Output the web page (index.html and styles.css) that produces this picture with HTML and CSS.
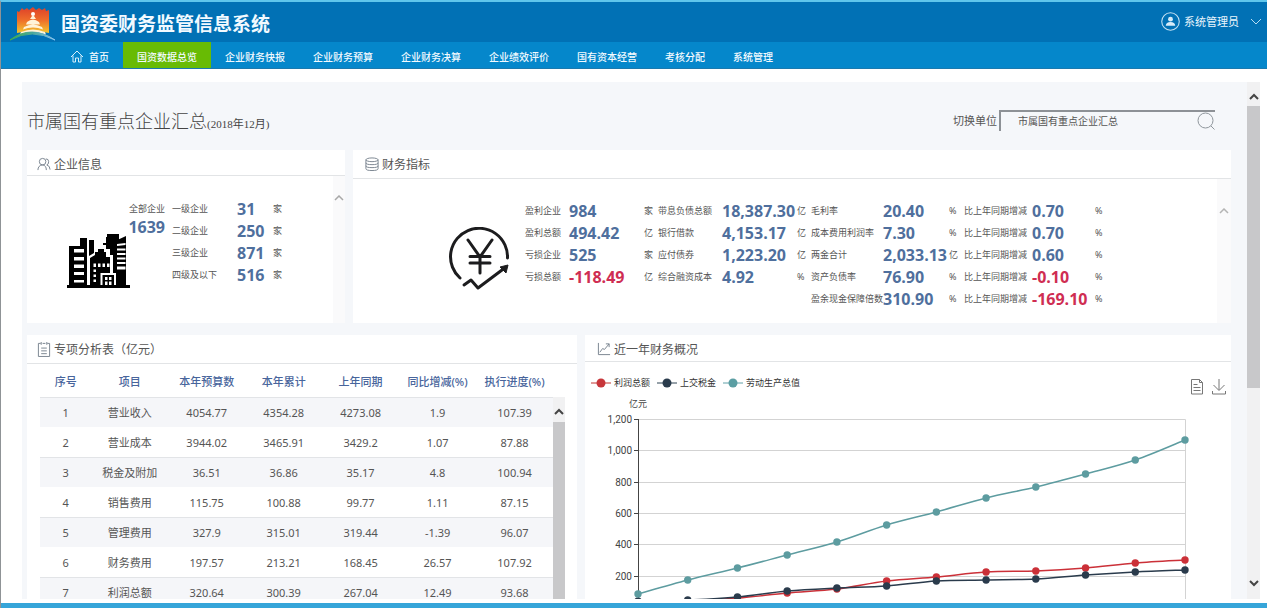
FILE: index.html
```html
<!DOCTYPE html>
<html lang="zh-CN">
<head>
<meta charset="utf-8">
<title>国资委财务监管信息系统</title>
<link rel="stylesheet" href="styles.css">
</head>
<body>
<header class="topbar">
  <svg class="logo" viewBox="0 0 48 36" aria-hidden="true">
    <defs>
      <linearGradient id="lg" x1="0" y1="0" x2="0" y2="1"><stop offset="0" stop-color="#dd3f2a"/><stop offset=".5" stop-color="#ee6d2a"/><stop offset="1" stop-color="#f3c62f"/></linearGradient>
      <linearGradient id="arc" x1="0" x2="1"><stop offset="0" stop-color="#3fae49"/><stop offset=".5" stop-color="#4aa79a"/><stop offset="1" stop-color="#8cc4f0"/></linearGradient>
    </defs>
    <path d="M8 5l2 1 3-4 2 2 3-2 2 2 4-3 3 3 3-2 3 2 3-2 1 3 3-1v23l-16-3-16 3z" fill="url(#lg)"/>
    <circle cx="24" cy="8" r="2" fill="#fff"/>
    <path d="M23 10h2l2 3h-6zM18 16q6-5 12 0l1 2.500H17zM15 21q9-5 18 0l1 2.500q-10-4-20 0zM12 26q12-5 24 0l1 2.500q-13-5-26 0z" fill="#fff3d8"/>
    <path d="M1 34Q22 18 46 34Q23 22 1 34z" fill="url(#arc)" stroke="url(#arc)"/>
  </svg>
  <h1 class="app-title">国资委财务监管信息系统</h1>
  <button class="user" type="button">
    <svg class="avatar" viewBox="0 0 18 18" aria-hidden="true"><circle cx="9" cy="9" r="8.300" fill="none" stroke="#c4e1f3"/><circle cx="9" cy="6.800" r="2.300" fill="#d6ebf8"/><path d="M4.500 13q.3-3.500 4.500-3.500t4.500 3.500z" fill="#d6ebf8"/></svg>
    <span>系统管理员</span>
    <svg class="caret" viewBox="0 0 12 7" aria-hidden="true"><path d="M1 1l5 5 5-5" fill="none" stroke="#b8dcf2"/></svg>
  </button>
</header>
<nav class="nav">
  <a class="nav-item home" href="#"><svg viewBox="0 0 14 13" aria-hidden="true"><path d="M1 7l6-6 6 6M3 5.500V12h2.500V8h3v4H11V5.500" fill="none" stroke="#d8effb"/></svg>首页</a>
  <a class="nav-item active" href="#">国资数据总览</a>
  <a class="nav-item" href="#">企业财务快报</a>
  <a class="nav-item" href="#">企业财务预算</a>
  <a class="nav-item" href="#">企业财务决算</a>
  <a class="nav-item" href="#">企业绩效评价</a>
  <a class="nav-item" href="#">国有资本经营</a>
  <a class="nav-item" href="#">考核分配</a>
  <a class="nav-item" href="#">系统管理</a>
</nav>
<div class="viewport">
  <main class="content">
    <div class="page-head">
      <h2 class="page-title">市属国有重点企业汇总<small>(2018年12月)</small></h2>
      <div class="switcher">
        <label for="unit">切换单位</label>
        <div class="search">
          <input id="unit" type="text" value="市属国有重点企业汇总">
          <svg viewBox="0 0 18 18" aria-hidden="true"><circle cx="8.500" cy="8.500" r="7.500" fill="none" stroke="#8f969c"/><path d="M14 14l3.500 3.500" stroke="#8f969c"/></svg>
        </div>
      </div>
    </div>

    <div class="row row-top">
      <section class="card">
        <h3 class="card-head"><svg viewBox="0 0 15 15" aria-hidden="true"><g fill="none" stroke="#75808c"><circle cx="6" cy="5" r="3.500"/><path d="M1 14q0-5 5-5.500M6 8.500q4 .5 4 5.500M9.500 2q3 0 3 3t-2 3.500q3.500 1 3.500 5"/></g></svg>企业信息</h3>
        <div class="card-body">
          <div class="company">
            <div class="total">
              <span>全部企业</span>
              <b>1639</b>
              <svg class="city" viewBox="0 0 65 54" aria-hidden="true">
                <path d="M0 51h2V12h11V4h7v47h3V24l5-3v-3h3v-3h6v3h2v5h4v28h3V8l13-6v49h4v3H0z"/>
                <path d="M22 6h5v13l-5 3zM39 3h1V0h12v6l-6 3v12h-3v-6h-4v-4h-3V9h3z"/>
                <g fill="#fff"><path d="M7 15h10v3.500H7zM7 23h10v3.500H7zM7 30.500h10V34H7zM7 38h10v3H7zM7 46h10v2.500H7z"/><path d="M50 10l8.500-1v2L50 12zM50 14.500h8.500v2H50zM50 19h8.500v2H50zM50 23.500h8.500v2H50zM50 28h8.500v2H50zM50 32.500h8.500v3H50z"/><path d="M26.500 29.500h2.500v3.500h-2.500zM31 29.500h2.500v3.500H31zM35.500 29.500H38v3.500h-2.500zM40 29.500h2.500v3.500H40zM26.500 35.500H29v2.500h-2.500zM26.500 40.500H29V43h-2.500zM26.500 45.500H29V48h-2.500z"/></g>
                <path d="M34.500 51V40h13.500v11" stroke="#fff" stroke-width="2"/><path d="M38 43h2.500v3H38zM42 43h2.500v3H42zM38 47.500h2.500V51H38zM42 47.500h2.500V51H42z" fill="#fff"/>
              </svg>
            </div>
            <div class="levels">
              <span>一级企业</span><b>31</b><span>家</span>
              <span>二级企业</span><b>250</b><span>家</span>
              <span>三级企业</span><b>871</b><span>家</span>
              <span>四级及以下</span><b>516</b><span>家</span>
            </div>
          </div>
          <div class="faint-scroll"><svg viewBox="0 0 10 6" aria-hidden="true"><path d="M1 5l4-4 4 4" fill="none" stroke="#a8a8a8" stroke-width="1.500"/></svg></div>
        </div>
      </section>

      <section class="card">
        <h3 class="card-head tall wide"><svg viewBox="0 0 15 15" aria-hidden="true"><g fill="none" stroke="#75808c"><ellipse cx="7.500" cy="3" rx="6.500" ry="2"/><path d="M1 3v9.500q0 2 6.500 2t6.500-2V3M1 6.200q0 2 6.500 2t6.500-2M1 9.400q0 2 6.500 2t6.500-2"/></g></svg>财务指标</h3>
        <div class="card-body">
          <div class="finance">
            <svg class="yuan" viewBox="0 0 62 64" aria-hidden="true"><g fill="none" stroke="#1c1c1e" stroke-width="3" stroke-linecap="round" stroke-linejoin="round"><path d="M11 51A28.500 28.500 0 1 1 58.500 31"/><path d="M15 58l7-5 7 8 24-18"/><path d="M19 13l12 17 12-17M31 30v16M21 29.500h20M21 36h20"/></g><path d="M51 40l8-2-2 8z" fill="#1c1c1e" stroke="#1c1c1e"/></svg>
            <div class="metrics">
              <span>盈利企业</span><b>984</b><span>家</span><span>带息负债总额</span><b>18,387.30</b><span>亿</span><span>毛利率</span><b>20.40</b><span>%</span><span>比上年同期增减</span><b>0.70</b><span>%</span>
              <span>盈利总额</span><b>494.42</b><span>亿</span><span>银行借款</span><b>4,153.17</b><span>亿</span><span>成本费用利润率</span><b>7.30</b><span>%</span><span>比上年同期增减</span><b>0.70</b><span>%</span>
              <span>亏损企业</span><b>525</b><span>家</span><span>应付债券</span><b>1,223.20</b><span>亿</span><span>两金合计</span><b>2,033.13</b><span>亿</span><span>比上年同期增减</span><b>0.60</b><span>%</span>
              <span>亏损总额</span><b class="neg">-118.49</b><span>亿</span><span>综合融资成本</span><b>4.92</b><span>%</span><span>资产负债率</span><b>76.90</b><span>%</span><span>比上年同期增减</span><b class="neg">-0.10</b><span>%</span>
              <span class="third">盈余现金保障倍数</span><b>310.90</b><span>%</span><span>比上年同期增减</span><b class="neg">-169.10</b><span>%</span>
            </div>
          </div>
          <div class="faint-scroll low"><svg viewBox="0 0 10 6" aria-hidden="true"><path d="M1 5l4-4 4 4" fill="none" stroke="#b4b4b4" stroke-width="1.500"/></svg></div>
        </div>
      </section>
    </div>

    <div class="row row-bottom">
      <section class="card">
        <h3 class="card-head tall"><svg viewBox="0 0 15 17" aria-hidden="true"><g fill="none" stroke="#75808c"><path d="M4 2.500H1.500v14h12v-14H11M6 2.500h3M4.500 1v3M10.500 1v3M4.500 7.500h6M4.500 10.500h6M4.500 13.500h6"/></g></svg>专项分析表（亿元）</h3>
        <div class="table-wrap">
          <div class="table-main">
            <table class="report">
              <colgroup><col class="c-no"><col class="c-item"><col span="5"></colgroup>
              <thead><tr><th>序号</th><th>项目</th><th>本年预算数</th><th>本年累计</th><th>上年同期</th><th>同比增减(%)</th><th>执行进度(%)</th></tr></thead>
              <tbody>
                <tr><td>1</td><td>营业收入</td><td>4054.77</td><td>4354.28</td><td>4273.08</td><td>1.9</td><td>107.39</td></tr>
                <tr><td>2</td><td>营业成本</td><td>3944.02</td><td>3465.91</td><td>3429.2</td><td>1.07</td><td>87.88</td></tr>
                <tr><td>3</td><td>税金及附加</td><td>36.51</td><td>36.86</td><td>35.17</td><td>4.8</td><td>100.94</td></tr>
                <tr><td>4</td><td>销售费用</td><td>115.75</td><td>100.88</td><td>99.77</td><td>1.11</td><td>87.15</td></tr>
                <tr><td>5</td><td>管理费用</td><td>327.9</td><td>315.01</td><td>319.44</td><td>-1.39</td><td>96.07</td></tr>
                <tr><td>6</td><td>财务费用</td><td>197.57</td><td>213.21</td><td>168.45</td><td>26.57</td><td>107.92</td></tr>
                <tr><td>7</td><td>利润总额</td><td>320.64</td><td>300.39</td><td>267.04</td><td>12.49</td><td>93.68</td></tr>
              </tbody>
            </table>
          </div>
          <div class="scroll inner"><svg viewBox="0 0 10 7" aria-hidden="true"><path d="M1 6l4-4 4 4" fill="none" stroke="#444" stroke-width="2"/></svg><div class="thumb"></div></div>
        </div>
      </section>

      <section class="card">
        <h3 class="card-head mid"><svg viewBox="0 0 15 15" aria-hidden="true"><path d="M1.500 1v12.500H14M3 11l3-4 2 1 5-6M9.500 2H13v3.500" fill="none" stroke="#75808c"/></svg>近一年财务概况</h3>
        <div class="chart-bar">
          <ul class="legend">
            <li><svg viewBox="0 0 20 10" aria-hidden="true"><path d="M0 5h20" stroke="#c23531"/><circle cx="10" cy="5" r="4.500" fill="#c7363a"/></svg>利润总额</li>
            <li><svg viewBox="0 0 20 10" aria-hidden="true"><path d="M0 5h20" stroke="#2f4554"/><circle cx="10" cy="5" r="4.500" fill="#2a3b4c"/></svg>上交税金</li>
            <li><svg viewBox="0 0 20 10" aria-hidden="true"><path d="M0 5h20" stroke="#61a0a8"/><circle cx="10" cy="5" r="4.500" fill="#5b9ea3"/></svg>劳动生产总值</li>
          </ul>
          <div class="tools">
            <button type="button" aria-label="数据视图"><svg viewBox="0 0 16 17"><path d="M2.500 1.500h8l3 3v11.500h-11zM10.500 1.500v3h3M4.500 6.500h4M4.500 9.500h7M4.500 12.500h7" fill="none" stroke="#777"/></svg></button>
            <button type="button" aria-label="保存为图片"><svg viewBox="0 0 16 17"><path d="M8 1v11M2.500 7L8 12.500 13.500 7M1.500 13v3h13v-3" fill="none" stroke="#777"/></svg></button>
          </div>
        </div>
        <svg class="chart" viewBox="0 0 646 205" role="img" aria-label="近一年财务概况">
          <g stroke="#d3d3d3"><path d="M53 25.500H600.500V205M53 56.500H600M53 88.500H600M53 119.500H600M53 150.500H600M53 182.500H600" fill="none"/></g>
          <path d="M53.500 25V205M49 25.500h5M49 56.500h5M49 88.500h5M49 119.500h5M49 150.500h5M49 182.500h5" stroke="#444" fill="none"/>
          <g class="axis"><text x="53" y="13" text-anchor="middle" class="unit">亿元</text><g text-anchor="end"><text x="47" y="29">1,200</text><text x="47" y="60">1,000</text><text x="47" y="92">800</text><text x="47" y="123">600</text><text x="47" y="154">400</text><text x="47" y="186">200</text></g></g>
          <g id="series" fill="none" stroke-width="1.500"></g>
        </svg>
      </section>
    </div>
  </main>
  <div class="scroll outer"><svg viewBox="0 0 10 7" aria-hidden="true"><path d="M1 6l4-4 4 4" fill="none" stroke="#444" stroke-width="2"/></svg><div class="thumb"></div><svg class="down" viewBox="0 0 10 7" aria-hidden="true"><path d="M1 1l4 4 4-4" fill="none" stroke="#444" stroke-width="2"/></svg></div>
</div>
<footer class="bottom-strip"></footer>
<script src="chart.js"></script>
</body>
</html>
```
FILE: styles.css
```css
* { box-sizing: border-box; }
body {
  margin: 0;
  height: 100vh;
  display: flex;
  flex-direction: column;
  overflow: hidden;
  background: #fff;
  border-left: 1px solid #8f9396;
  border-top: 2px solid #5fc6ec;
  font-family: "Noto Sans", "Noto Sans CJK SC", sans-serif;
  font-size: 11px;
  color: #555;
}
h1, h2, h3, ul { margin: 0; padding: 0; font-weight: normal; }
svg { display: block; flex: none; }
button { border: 0; padding: 0; background: none; font: inherit; color: inherit; }

.topbar {
  flex: none;
  height: 40px;
  display: flex;
  align-items: center;
  padding: 0 5px 0 8px;
  background: #0171b5;
  color: #fff;
}
.logo { width: 48px; height: 36px; margin-top: 4px; }
.app-title { margin-left: 4px; font-size: 19px; font-weight: bold; line-height: 28px; margin-top: 4px; color: #f2faff; }
.user { margin-left: auto; padding-bottom: 2px; display: flex; align-items: center; color: #eaf6fd; }
.avatar { width: 19px; height: 19px; margin-right: 4px; }
.caret { width: 12px; height: 7px; margin-left: 11px; }

.nav { flex: none; height: 27px; display: flex; padding-left: 55px; background: #0587cb; border-bottom: 1px solid #1b79ae; }
.nav-item { display: flex; align-items: center; padding: 2px 14px 0; font-size: 10px; font-weight: 500; color: #f2faff; text-decoration: none; white-space: nowrap; }
.nav-item svg { width: 14px; height: 13px; margin-right: 5px; }
.nav-item.active { background: #68bb04; }

.viewport { flex: 1; min-height: 0; display: flex; margin: 13px 7px 4px 21px; }
.content { flex: 1; min-width: 0; overflow: hidden; background: #f5f7fa; padding: 0 16px 0 5px; }
.page-head { height: 68px; display: flex; align-items: center; justify-content: space-between; padding: 8px 16px 0 0; }
.page-title { font-size: 18px; font-weight: 300; color: #444; }
.page-title small { font-family: "Liberation Serif", "Noto Sans CJK SC", serif; font-size: 11px; font-weight: 400; }
.switcher { display: flex; align-items: center; gap: 2px; }
.search { display: flex; align-items: center; width: 216px; height: 21px; border-top: 2px solid #8d9196; border-left: 2px solid #8d9196; }
.search input { flex: 1; min-width: 0; border: 0; outline: 0; padding: 0 0 2px 17px; background: transparent; font: inherit; font-size: 10px; color: #555; }
.search svg { width: 18px; height: 18px; }

.row { display: grid; gap: 8px; }
.row-top { grid-template-columns: 318fr 878fr; margin-bottom: 12px; }
.row-bottom { grid-template-columns: 550fr 646fr; }
.card { background: #fff; min-width: 0; }
.card-head { height: 26px; display: flex; align-items: center; gap: 3px; padding: 2px 0 0 10px; font-size: 12px; color: #555; border-bottom: 1px solid #e2e4e6; }
.card-head svg { width: 14px; height: 16px; }
.card-head.tall { height: 29px; padding-top: 0; }
.card-head.wide { padding-left: 12px; }
.card-head.mid { height: 27px; padding: 2px 0 0 12px; }
.card-body { display: flex; height: 147px; font-size: 9px; }
.card-head.tall + .card-body { height: 144px; }
.card-body span { white-space: nowrap; line-height: 22px; }
.card-body b { font-family: "Open Sans", sans-serif; font-size: 16px; line-height: 22px; color: #4f6f9d; white-space: nowrap; }
.card-body b.neg { color: #cf2d52; }
.faint-scroll { width: 12px; padding: 19px 1px 0; background: #fafafb; }
.faint-scroll svg { width: 10px; height: 6px; }
.faint-scroll.low { width: 14px; padding: 29px 2px 0; }
.company { flex: 1; display: flex; gap: 7px; padding: 22px 0 0 40px; }
.total { width: 98px; display: flex; flex-direction: column; align-items: flex-end; }
.total b { line-height: 14px; }
.city { width: 65px; height: 54px; align-self: flex-start; }
.levels { display: grid; grid-template-columns: 65px 36px 9px; grid-auto-rows: 22px; align-content: start; }
.finance { flex: 1; display: flex; gap: 14px; padding: 21px 0 0 96px; }
.yuan { width: 62px; height: 64px; margin-top: 27px; }
.metrics { display: grid; grid-template-columns: 44px 75px 14px 64px 75px 14px 72px 66px 15px 68px 63px 10px; grid-auto-rows: 22px; align-content: start; }
.metrics .third { grid-column: 7; }

.table-wrap { display: flex; padding: 0 12px 0 13px; }
.table-main { flex: 1; min-width: 0; }
.report { width: 100%; table-layout: fixed; border-collapse: collapse; text-align: center; }
.c-no { width: 10%; }
.c-item { width: 15%; }
.report th, .report td { height: 30px; padding: 0; }
.report th { height: 33px; font-weight: 500; color: #48659c; white-space: nowrap; }
.report tbody tr:nth-child(odd) { background: #f5f6f9; box-shadow: inset 0 1px #e2e4e7; }

.scroll { display: flex; flex-direction: column; align-items: center; background: #f1f1f2; }
.scroll svg { width: 10px; height: 7px; }
.scroll .thumb { width: 100%; background: #c8c8ca; }
.scroll.inner { width: 12px; margin-top: 33px; padding-top: 11px; }
.scroll.inner .thumb { flex: 1; margin-top: 7px; }
.scroll.outer { width: 13px; padding: 11px 0 12px; }
.scroll.outer .thumb { height: 57%; margin-top: 6px; }
.scroll.outer .down { margin-top: auto; }

.chart-bar { display: flex; justify-content: space-between; height: 32px; padding: 0 4px 0 6px; }
.legend { display: flex; gap: 7px; list-style: none; font-size: 9px; color: #333; height: 41px; }
.legend li { display: flex; align-items: center; gap: 3px; white-space: nowrap; }
.legend svg { width: 20px; height: 10px; }
.tools { display: flex; align-items: center; gap: 6px; padding-top: 17px; }
.tools svg { width: 16px; height: 17px; }
.chart { width: 100%; height: auto; }
.axis { font-family: Roboto, sans-serif; font-size: 10px; fill: #444; }
.axis .unit { font-family: "Noto Sans CJK SC", sans-serif; font-size: 9px; }

.bottom-strip { flex: none; height: 5px; background: #36a5d9; }
```
FILE: chart.js
```js
// Monthly values plotted as smooth lines with round markers.
const series = [
  { color: "#cb3038", y: [208, 207, 204, 199, 195, 187, 183, 178, 177, 174, 169, 166] },
  { color: "#2a3b4c", y: [207, 206, 203, 197, 194, 192, 187, 186, 185, 181, 178, 176] },
  { color: "#5d9ca0", y: [200, 186, 174, 161, 148, 131, 118, 104, 93, 80, 66, 46] }
];
const start = 53, end = 600;
let markup = "";
for (const s of series) {
  const pts = s.y.map((y, i) => [start + (end - start) * i / (s.y.length - 1), y]);
  let d = "M" + pts[0];
  for (let i = 1; i < pts.length; i++) {
    const before = pts[i - 2] || pts[i - 1], a = pts[i - 1], b = pts[i], after = pts[i + 1] || b;
    d += "C" + [a[0] + (b[0] - before[0]) / 6, a[1] + (b[1] - before[1]) / 6,
      b[0] - (after[0] - a[0]) / 6, b[1] - (after[1] - a[1]) / 6, b[0], b[1]];
  }
  markup += `<path d="${d}" stroke="${s.color}"/>`;
  markup += pts.map(p => `<circle cx="${p[0]}" cy="${p[1]}" r="3.700" fill="${s.color}"/>`).join("");
}
document.getElementById("series").innerHTML = markup;
```
